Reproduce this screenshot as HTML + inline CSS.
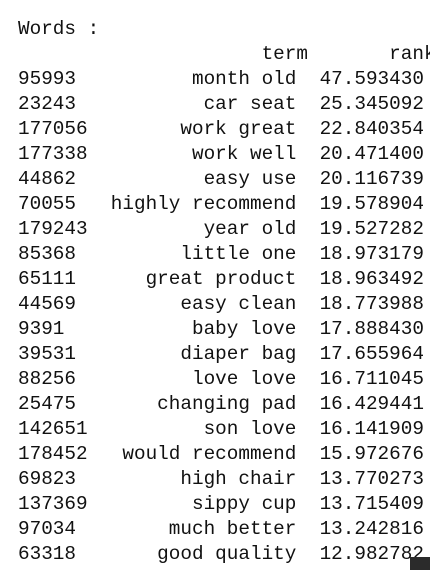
<!DOCTYPE html>
<html><head><style>
html,body{margin:0;padding:0;background:#fff;width:430px;height:570px;overflow:hidden;position:relative}
pre{position:absolute;left:18px;top:17px;margin:0;font-family:"Liberation Mono",monospace;font-size:19.33px;line-height:25px;color:#111;white-space:pre}
.box{position:absolute;left:410px;top:557px;width:20px;height:13px;background:#2b2b2b}
</style></head><body>
<pre>Words :
                     term       rank
95993          month old  47.593430
23243           car seat  25.345092
177056        work great  22.840354
177338         work well  20.471400
44862           easy use  20.116739
70055   highly recommend  19.578904
179243          year old  19.527282
85368         little one  18.973179
65111      great product  18.963492
44569         easy clean  18.773988
9391           baby love  17.888430
39531         diaper bag  17.655964
88256          love love  16.711045
25475       changing pad  16.429441
142651          son love  16.141909
178452   would recommend  15.972676
69823         high chair  13.770273
137369         sippy cup  13.715409
97034        much better  13.242816
63318       good quality  12.982782</pre>
<div class="box"></div>
</body></html>
